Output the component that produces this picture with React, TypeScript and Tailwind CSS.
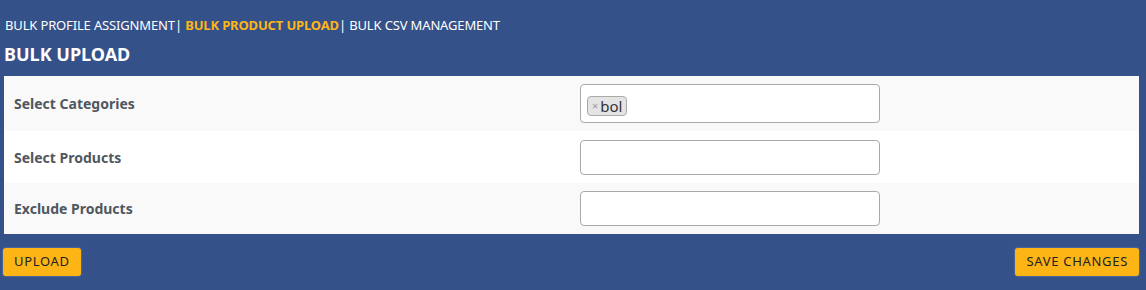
const rows = [
  { label: "Select Categories", tags: ["bol"] },
  { label: "Select Products", tags: [] as string[] },
  { label: "Exclude Products", tags: [] as string[] },
];

const App = () => {
  return (
    <div
      className="w-[1146px] h-[290px] bg-[#35518a] pl-[3px] pr-[7px] pt-[17px] overflow-hidden"
      style={{ fontFamily: '"Noto Sans", "Open Sans", sans-serif' }}
    >
      {/* tabs */}
      <div className="flex items-center text-[13px] leading-[16px] tracking-[-0.15px] text-white pl-[2px] whitespace-pre">
        <span>BULK PROFILE ASSIGNMENT</span>
        <span>| </span>
        <span className="font-bold text-[#fdb515]">BULK PRODUCT UPLOAD</span>
        <span>| </span>
        <span>BULK CSV MANAGEMENT</span>
      </div>
      <h2 className="text-[18px] leading-[22px] font-bold text-white mt-[10px] pl-[1px]">
        BULK UPLOAD
      </h2>

      {/* table */}
      <div className="mt-[11px] ml-[1px]">
        {rows.map((row, i) => (
          <div
            key={row.label}
            className={`flex items-center ${
              i % 2 === 0 ? "bg-[#f9f9f9]" : "bg-white"
            } ${i === 0 ? "h-[55px]" : i === 1 ? "h-[52px]" : "h-[51px]"}`}
          >
            <div className="w-[576px] pl-[10px] text-[14px] font-bold text-[#50575e]">
              {row.label}
            </div>
            <div
              className={`w-[300px] ${
                i === 0 ? "h-[39px] pt-[7px]" : "h-[35px]"
              } bg-white border border-[#aaa] rounded-[4px] px-[6px]`}
            >
              {row.tags.map((tag) => (
                <span
                  key={tag}
                  className="inline-flex items-center h-[20px] px-[4px] bg-[#e4e4e4] border border-[#aaa] rounded-[4px] text-[15px] text-[#333]"
                >
                  <span className="text-[11px] text-[#999] mr-[2px]">×</span>
                  {tag}
                </span>
              ))}
            </div>
          </div>
        ))}
      </div>

      {/* buttons */}
      <div className="flex justify-between mt-[14px]">
        <button className="h-[28px] px-[11px] bg-[#fdb515] rounded-[3px] text-[13px] tracking-[0.7px] text-[#222] shadow-[0_0_2px_rgba(255,255,255,0.4)]">
          UPLOAD
        </button>
        <button className="h-[28px] px-[11px] bg-[#fdb515] rounded-[3px] text-[13px] tracking-[0.7px] text-[#222] shadow-[0_0_2px_rgba(255,255,255,0.4)]">
          SAVE CHANGES
        </button>
      </div>
    </div>
  );
};

export default App;
